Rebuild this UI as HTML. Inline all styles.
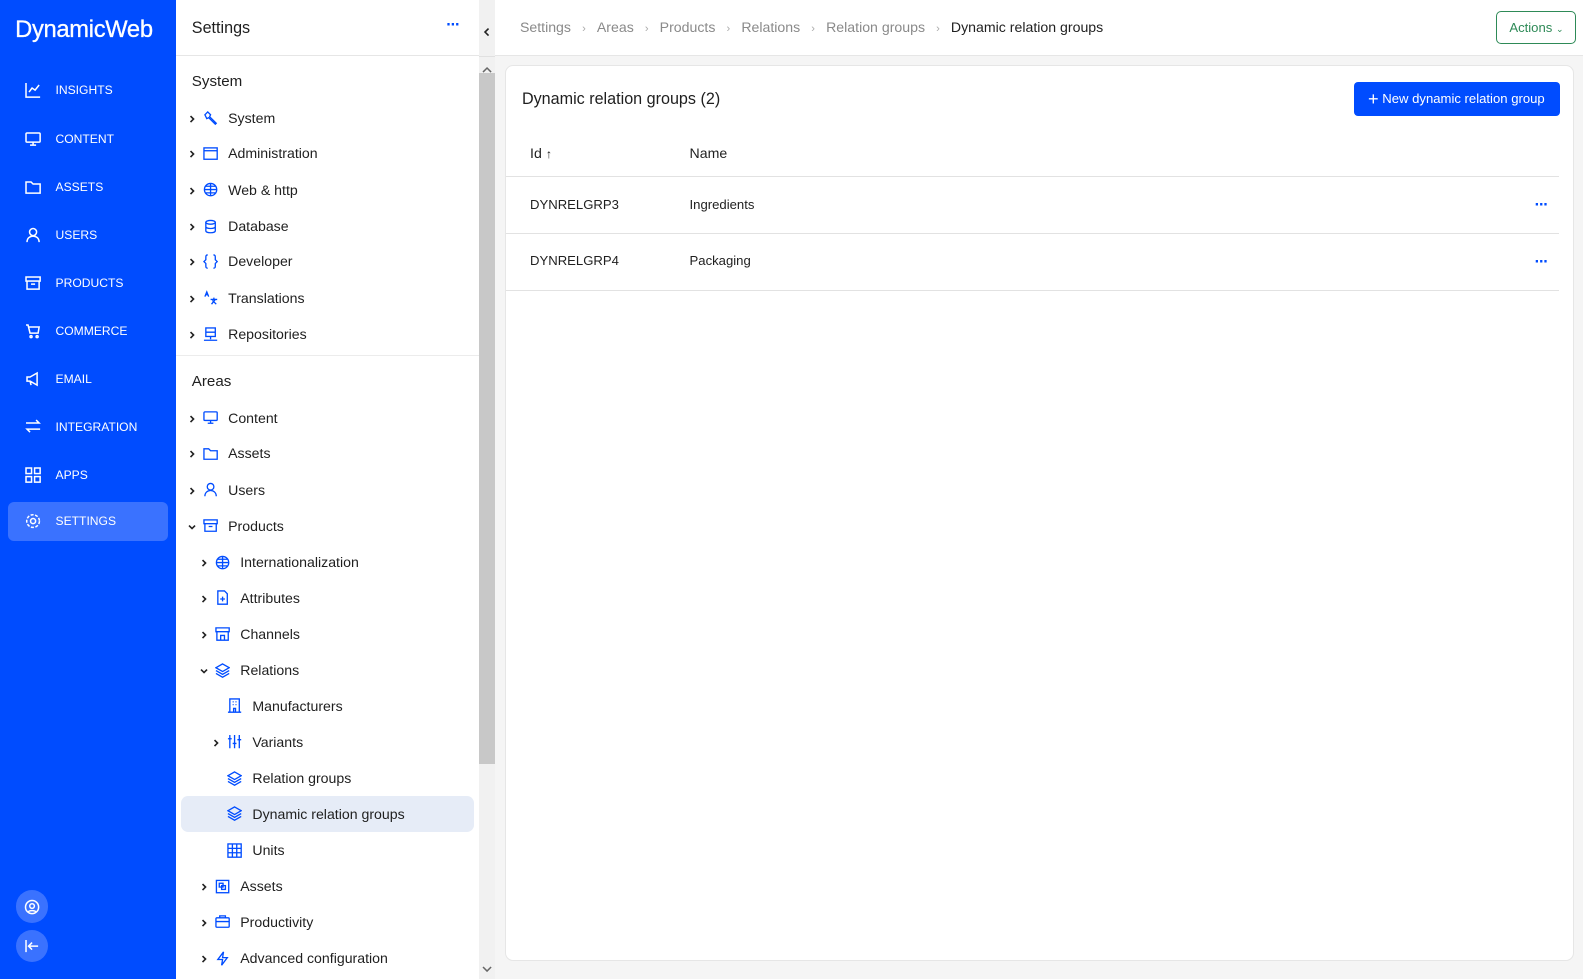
<!DOCTYPE html>
<html><head><meta charset="utf-8">
<style>
*{box-sizing:border-box;margin:0;padding:0}
html{zoom:1.0096}
body{width:1568px;height:961px;overflow:hidden;font-family:"Liberation Sans",sans-serif;background:#f5f5f5;position:relative;color:#1f1f1f}
.nav{position:absolute;left:0;top:0;width:174px;height:970px;background:#004cff;color:#fff}
.logo{position:absolute;left:15px;top:17px;font-size:23.5px;letter-spacing:-0.3px;-webkit-text-stroke:0.3px #fff}
.ni{position:absolute;left:8px;width:158px;height:39px;font-size:12px;display:flex;align-items:center}
.ni svg{position:absolute;left:17px;width:16px;height:16px}
.ni span{position:absolute;left:47px}
.ni.sel{background:#3a72ff;border-radius:6px}
.circ{position:absolute;left:16px;width:32px;height:32px;border-radius:50%;background:#3a72ff;display:flex;align-items:center;justify-content:center}
.panel{position:absolute;left:174px;top:0;width:300px;height:970px;background:#fff}
.ph{position:absolute;left:0;top:0;width:300px;height:55px;border-bottom:1px solid #e6e6e6}
.ph b{position:absolute;left:16px;top:19px;font-weight:normal;font-size:16px}
.dots{position:absolute;color:#004cff;font-size:16px;font-weight:bold;letter-spacing:-1px}
.sec{position:absolute;left:16px;font-size:15px}
.row{position:absolute;height:20px;font-size:14px;display:flex;align-items:center;white-space:nowrap}
.row .ch{width:14px;display:inline-block;margin-left:4px}
.row svg{width:15px;height:15px;margin:0 10px 0 1px;flex:none}
.row .ch svg{width:8px;height:8px;margin:0}
.sb{position:absolute;left:474px;top:0;width:16px;height:970px;background:#f1f1f1}
.main{position:absolute;left:490px;top:0;width:1093px;height:970px}
.top{position:absolute;left:0;top:0;width:1093px;height:55px;background:#fff;border-bottom:1px solid #e6e6e6}
.bc{position:absolute;left:25px;top:19px;font-size:14px;color:#8a8a8a;white-space:nowrap}
.bc i{font-style:normal;margin:0 11px;font-size:11px;color:#aaa}
.card{position:absolute;left:10px;top:64px;width:1059px;height:888px;background:#fff;border:1px solid #e6e6e6;border-radius:8px}
.td{position:absolute;font-size:14px}
.hl{position:absolute;left:0;width:1043px;height:1px;background:#e2e2e2}
</style></head><body>
<svg width="0" height="0" style="position:absolute"><defs>
<symbol id="cr" viewBox="0 0 8 8"><path d="M2.5 1l3 3-3 3" fill="none" stroke="#222" stroke-width="1.6"/></symbol>
<symbol id="cd" viewBox="0 0 8 8"><path d="M1 2.5l3 3 3-3" fill="none" stroke="#222" stroke-width="1.6"/></symbol>
</defs></svg>
<div class="nav">
<div class="logo">DynamicWeb</div>
<div class="ni" style="top:70px"><svg viewBox="0 0 16 16" fill="none" stroke="#fff" stroke-width="1.5"><path d="M1 1v14h14M4 10l3-4 3 2 4-5"/></svg><span>INSIGHTS</span></div>
<div class="ni" style="top:118px"><svg viewBox="0 0 16 16" fill="none" stroke="#fff" stroke-width="1.5"><rect x="1" y="2" width="14" height="9" rx="1"/><path d="M8 11v3M5 14h6"/></svg><span>CONTENT</span></div>
<div class="ni" style="top:166px"><svg viewBox="0 0 16 16" fill="none" stroke="#fff" stroke-width="1.5"><path d="M1 3h5l2 2h7v9H1z"/></svg><span>ASSETS</span></div>
<div class="ni" style="top:213px"><svg viewBox="0 0 16 16" fill="none" stroke="#fff" stroke-width="1.5"><circle cx="8" cy="5" r="3.5"/><path d="M2 15c0-4 3-6 6-6s6 2 6 6"/></svg><span>USERS</span></div>
<div class="ni" style="top:261px"><svg viewBox="0 0 16 16" fill="none" stroke="#fff" stroke-width="1.5"><rect x="1" y="2" width="14" height="4"/><path d="M2 6v8h12V6M6 9h4"/></svg><span>PRODUCTS</span></div>
<div class="ni" style="top:308px"><svg viewBox="0 0 16 16" fill="none" stroke="#fff" stroke-width="1.5"><path d="M1 2h2l2 8h8l1-6H4"/><circle cx="6" cy="13.5" r="1"/><circle cx="12" cy="13.5" r="1"/></svg><span>COMMERCE</span></div>
<div class="ni" style="top:356px"><svg viewBox="0 0 16 16" fill="none" stroke="#fff" stroke-width="1.5"><path d="M2 6h3l7-4v12L5 10H2zM5 10l1 4"/></svg><span>EMAIL</span></div>
<div class="ni" style="top:403px"><svg viewBox="0 0 16 16" fill="none" stroke="#fff" stroke-width="1.5"><path d="M1 5h13l-3-3M15 11H2l3 3"/></svg><span>INTEGRATION</span></div>
<div class="ni" style="top:451px"><svg viewBox="0 0 16 16" fill="none" stroke="#fff" stroke-width="1.5"><rect x="1" y="1" width="5.5" height="5.5"/><rect x="9.5" y="1" width="5.5" height="5.5"/><rect x="1" y="9.5" width="5.5" height="5.5"/><rect x="9.5" y="9.5" width="5.5" height="5.5"/></svg><span>APPS</span></div>
<div class="ni sel" style="top:497px"><svg viewBox="0 0 16 16" fill="none" stroke="#fff" stroke-width="1.5"><circle cx="8" cy="8" r="2.5"/><circle cx="8" cy="8" r="6.3" stroke-dasharray="3 1.5"/></svg><span>SETTINGS</span></div>
<div class="circ" style="top:882px"><svg width="16" height="16" viewBox="0 0 16 16" fill="none" stroke="#fff" stroke-width="1.5"><circle cx="8" cy="8" r="6.5"/><circle cx="8" cy="7" r="2.3"/><path d="M4 13c1-2 7-2 8 0"/></svg></div>
<div class="circ" style="top:921px"><svg width="16" height="16" viewBox="0 0 16 16" fill="none" stroke="#fff" stroke-width="1.5"><path d="M2 2v12M14 8H5M8 4.5L4.5 8 8 11.5"/></svg></div>
</div>

<div class="panel">
<div class="ph"><b>Settings</b><span class="dots" style="left:268px;top:16px">···</span></div>
<div style="position:absolute;left:0;top:352px;width:300px;height:1px;background:#ececec"></div>
<div class="sec" style="top:72px">System</div>
<div class="sec" style="top:369px">Areas</div>
</div>
<div class="sb">
<div style="position:absolute;left:0;top:0;width:16px;height:55px;background:#f1f1f1;text-align:center;padding-top:23px"><svg width="8" height="10" viewBox="0 0 8 10"><path d="M5.5 1.5L2 5l3.5 3.5" fill="none" stroke="#222" stroke-width="1.6"/></svg></div>
<div style="position:absolute;left:0;top:55px;width:16px;height:1px;background:#e0e0e0"></div>
<div style="position:absolute;left:3px;top:59px"><svg width="10" height="8"><path d="M1 6l4-4 4 4" fill="none" stroke="#666" stroke-width="1.5"/></svg></div>
<div style="position:absolute;left:0;top:72px;width:16px;height:685px;background:#c8c8c8"></div>
<div style="position:absolute;left:3px;top:950px"><svg width="10" height="8"><path d="M1 2l4 4 4-4" fill="none" stroke="#666" stroke-width="1.5"/></svg></div>
</div>

<div class="main">
<div class="top">
<div class="bc">Settings<i>›</i>Areas<i>›</i>Products<i>›</i>Relations<i>›</i>Relation groups<i>›</i><span style="color:#1f1f1f">Dynamic relation groups</span></div>
<div style="position:absolute;left:992px;top:11px;width:79px;height:33px;border:1px solid #2e8a57;border-radius:5px;color:#2e8a57;font-size:13px;line-height:31px;padding-left:12px">Actions <span style="font-size:9px">⌄</span></div>
</div>
<div class="card">
<div class="td" style="left:16px;top:24px;font-size:16px">Dynamic relation groups (2)</div>
<div style="position:absolute;left:840px;top:16px;width:204px;height:34px;background:#004cff;border-radius:4px;color:#fff;font-size:13px;line-height:34px;padding-left:14px"><span style="font-size:18px;vertical-align:-2px">+</span> New dynamic relation group</div>
<div class="td" style="left:24px;top:79px">Id <span style="font-size:12px">↑</span></div>
<div class="td" style="left:182px;top:79px">Name</div>
<div class="hl" style="top:109px"></div>
<div class="td" style="left:24px;top:130px;font-size:13px">DYNRELGRP3</div>
<div class="td" style="left:182px;top:130px;font-size:13px">Ingredients</div>
<span class="dots" style="left:1019px;top:129px">···</span>
<div class="hl" style="top:166px"></div>
<div class="td" style="left:24px;top:186px;font-size:13px">DYNRELGRP4</div>
<div class="td" style="left:182px;top:186px;font-size:13px">Packaging</div>
<span class="dots" style="left:1019px;top:186px">···</span>
<div class="hl" style="top:222px"></div>
</div>
</div>

<div style="position:absolute;left:179px;top:788px;width:291px;height:36px;background:#e6ecf7;border-radius:7px"></div>

<div class="row" style="left:182px;top:107px"><span class="ch"><svg><use href="#cr"/></svg></span><svg viewBox="0 0 16 16" fill="none" stroke="#004cff" stroke-width="1.4"><path d="M2 4l3-3 3 3-1 2 7 7-1 1-7-7-2 1z"/></svg>System</div>
<div class="row" style="left:182px;top:142px"><span class="ch"><svg><use href="#cr"/></svg></span><svg viewBox="0 0 16 16" fill="none" stroke="#004cff" stroke-width="1.4"><rect x="1" y="2" width="14" height="12"/><path d="M1 5h14"/></svg>Administration</div>
<div class="row" style="left:182px;top:178px"><span class="ch"><svg><use href="#cr"/></svg></span><svg viewBox="0 0 16 16" fill="none" stroke="#004cff" stroke-width="1.4"><circle cx="8" cy="8" r="6.5"/><path d="M1.5 8h13M8 1.5v13M3 4.5h10M3 11.5h10"/></svg>Web &amp; http</div>
<div class="row" style="left:182px;top:214px"><span class="ch"><svg><use href="#cr"/></svg></span><svg viewBox="0 0 16 16" fill="none" stroke="#004cff" stroke-width="1.4"><ellipse cx="8" cy="3.5" rx="5" ry="2"/><path d="M3 3.5v9c0 2.7 10 2.7 10 0v-9M3 8c0 2.7 10 2.7 10 0"/></svg>Database</div>
<div class="row" style="left:182px;top:249px"><span class="ch"><svg><use href="#cr"/></svg></span><svg viewBox="0 0 16 16" fill="none" stroke="#004cff" stroke-width="1.4"><path d="M5 1C3 1 3 2 3 4v2L1 8l2 2v2c0 2 0 3 2 3M11 1c2 0 2 1 2 3v2l2 2-2 2v2c0 2 0 3-2 3"/></svg>Developer</div>
<div class="row" style="left:182px;top:285px"><span class="ch"><svg><use href="#cr"/></svg></span><svg viewBox="0 0 16 16" fill="none" stroke="#004cff" stroke-width="1.4"><path d="M2 7l2-5 2 5M3 5h2M8 10h7M11.5 8v2M9 15l4-5M10 11l4 4"/></svg>Translations</div>
<div class="row" style="left:182px;top:321px"><span class="ch"><svg><use href="#cr"/></svg></span><svg viewBox="0 0 16 16" fill="none" stroke="#004cff" stroke-width="1.4"><rect x="3" y="1" width="10" height="9"/><path d="M3 5.5h10M8 10v3M1 14h14"/></svg>Repositories</div>

<div class="row" style="left:182px;top:404px"><span class="ch"><svg><use href="#cr"/></svg></span><svg viewBox="0 0 16 16" fill="none" stroke="#004cff" stroke-width="1.4"><rect x="1" y="2" width="14" height="9" rx="1"/><path d="M8 11v3M5 14h6"/></svg>Content</div>
<div class="row" style="left:182px;top:439px"><span class="ch"><svg><use href="#cr"/></svg></span><svg viewBox="0 0 16 16" fill="none" stroke="#004cff" stroke-width="1.4"><path d="M1 3h5l2 2h7v9H1z"/></svg>Assets</div>
<div class="row" style="left:182px;top:475px"><span class="ch"><svg><use href="#cr"/></svg></span><svg viewBox="0 0 16 16" fill="none" stroke="#004cff" stroke-width="1.4"><circle cx="8" cy="5" r="3.5"/><path d="M2 15c0-4 3-6 6-6s6 2 6 6"/></svg>Users</div>
<div class="row" style="left:182px;top:511px"><span class="ch"><svg><use href="#cd"/></svg></span><svg viewBox="0 0 16 16" fill="none" stroke="#004cff" stroke-width="1.4"><rect x="1" y="2" width="14" height="4"/><path d="M2 6v8h12V6M6 9h4"/></svg>Products</div>
<div class="row" style="left:194px;top:547px"><span class="ch"><svg><use href="#cr"/></svg></span><svg viewBox="0 0 16 16" fill="none" stroke="#004cff" stroke-width="1.4"><circle cx="8" cy="8" r="6.5"/><path d="M1.5 8h13M8 1.5v13M3 4.5h10M3 11.5h10"/></svg>Internationalization</div>
<div class="row" style="left:194px;top:582px"><span class="ch"><svg><use href="#cr"/></svg></span><svg viewBox="0 0 16 16" fill="none" stroke="#004cff" stroke-width="1.4"><path d="M3 1h7l3 3v11H3zM8 7v5M5.5 9.5h5"/></svg>Attributes</div>
<div class="row" style="left:194px;top:618px"><span class="ch"><svg><use href="#cr"/></svg></span><svg viewBox="0 0 16 16" fill="none" stroke="#004cff" stroke-width="1.4"><path d="M1 2h14v4H1zM2 6v9h12V6M6 15v-5h4v5"/></svg>Channels</div>
<div class="row" style="left:194px;top:654px"><span class="ch"><svg><use href="#cd"/></svg></span><svg viewBox="0 0 16 16" fill="none" stroke="#004cff" stroke-width="1.4"><path d="M8 1l7 4-7 4-7-4zM1 8l7 4 7-4M1 11l7 4 7-4"/></svg>Relations</div>
<div class="row" style="left:224px;top:689px"><svg viewBox="0 0 16 16" fill="none" stroke="#004cff" stroke-width="1.4"><path d="M3 15V1h10v14M1 15h14M6 4h1M9 4h1M6 7h1M9 7h1M7 15v-4h2v4"/></svg>Manufacturers</div>
<div class="row" style="left:206px;top:725px"><span class="ch"><svg><use href="#cr"/></svg></span><svg viewBox="0 0 16 16" fill="none" stroke="#004cff" stroke-width="1.4"><path d="M3 1v14M8 1v14M13 1v14M1 5h4M6 10h4M11 6h4"/></svg>Variants</div>
<div class="row" style="left:224px;top:761px"><svg viewBox="0 0 16 16" fill="none" stroke="#004cff" stroke-width="1.4"><path d="M8 1l7 4-7 4-7-4zM1 8l7 4 7-4M1 11l7 4 7-4"/></svg>Relation groups</div>
<div class="row" style="left:224px;top:796px"><svg viewBox="0 0 16 16" fill="none" stroke="#004cff" stroke-width="1.4"><path d="M8 1l7 4-7 4-7-4zM1 8l7 4 7-4M1 11l7 4 7-4"/></svg>Dynamic relation groups</div>
<div class="row" style="left:224px;top:832px"><svg viewBox="0 0 16 16" fill="none" stroke="#004cff" stroke-width="1.4"><rect x="1" y="1" width="14" height="14"/><path d="M5.7 1v14M10.3 1v14M1 5.7h14M1 10.3h14"/></svg>Units</div>
<div class="row" style="left:194px;top:868px"><span class="ch"><svg><use href="#cr"/></svg></span><svg viewBox="0 0 16 16" fill="none" stroke="#004cff" stroke-width="1.4"><rect x="1.5" y="1.5" width="13" height="13"/><rect x="4.5" y="4.5" width="4" height="4"/><rect x="7" y="7" width="4" height="4"/></svg>Assets</div>
<div class="row" style="left:194px;top:903px"><span class="ch"><svg><use href="#cr"/></svg></span><svg viewBox="0 0 16 16" fill="none" stroke="#004cff" stroke-width="1.4"><rect x="1" y="4" width="14" height="10" rx="1"/><path d="M5 4V2h6v2M1 8h14"/></svg>Productivity</div>
<div class="row" style="left:194px;top:939px"><span class="ch"><svg><use href="#cr"/></svg></span><svg viewBox="0 0 16 16" fill="none" stroke="#004cff" stroke-width="1.4"><path d="M9 1L3 9h5l-1 6 6-8H8z"/></svg>Advanced configuration</div>
</body></html>
